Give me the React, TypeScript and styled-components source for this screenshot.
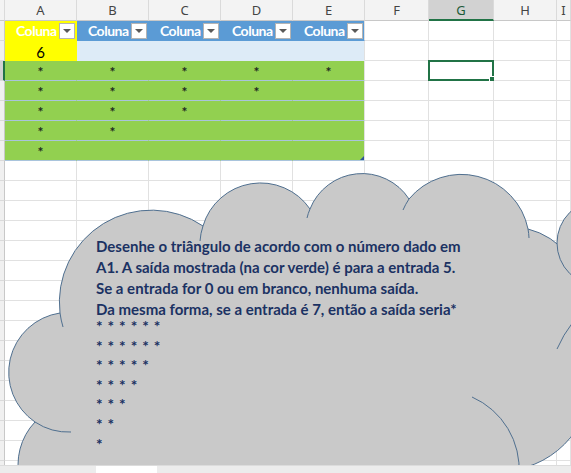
import React from 'react';
import styled, { createGlobalStyle } from 'styled-components';

const GlobalStyle = createGlobalStyle`
  html, body { margin: 0; padding: 0; background: #fff; }
  body { width: 571px; height: 473px; overflow: hidden; }
`;

const TEMPLATE = '5px 72px 72px 72px 72px 72px 64px 65px 63px 1fr';
const LETTERS = ['A', 'B', 'C', 'D', 'E', 'F', 'G', 'H', 'I'];
const GRID = '#e1e1e1';
const YELLOW = '#ffff00';
const BLUE = '#5b9bd5';
const PALE = '#ddebf7';
const GREEN = '#92d050';
const ROWLINE = '#a9c4dc';
const SELECT = '#217346';

const Window = styled.div`
  position: relative;
  width: 571px;
  height: 473px;
  overflow: hidden;
  display: flex;
  flex-direction: column;
  background: #fff;
`;

const HeaderRow = styled.div`
  display: grid;
  grid-template-columns: ${TEMPLATE};
  height: 21px;
  flex: none;
`;

const ColHead = styled.div<{ $active?: boolean }>`
  box-sizing: border-box;
  display: flex;
  align-items: center;
  justify-content: center;
  background: ${p => (p.$active ? '#d2d2d2' : '#f3f3f3')};
  color: ${p => (p.$active ? '#1e5a37' : '#444')};
  border-right: 1px solid #dadada;
  border-bottom: ${p => (p.$active ? `2px solid ${SELECT}` : '1px solid #c8c8c8')};
  font-family: 'Noto Sans', 'Open Sans', sans-serif;
  font-size: 13px;
  padding-top: ${p => (p.$active ? '1px' : '0')};
`;

const Sheet = styled.div`
  flex: 1;
  overflow: hidden;
  display: grid;
  grid-template-columns: ${TEMPLATE};
  grid-auto-rows: 20px;
`;

const RowHead = styled.div<{ $active?: boolean }>`
  box-sizing: border-box;
  background: ${p => (p.$active ? '#d2d2d2' : '#f0f0f0')};
  border-right: ${p => (p.$active ? `2px solid ${SELECT}` : '1px solid #c8c8c8')};
  border-bottom: 1px solid #dadada;
`;

const Cell = styled.div<{ $bg?: string; $line?: string; $vline?: string }>`
  position: relative;
  box-sizing: border-box;
  display: flex;
  align-items: center;
  justify-content: center;
  background: ${p => p.$bg ?? '#fff'};
  border-right: 1px solid ${p => p.$vline ?? GRID};
  border-bottom: 1px solid ${p => p.$line ?? GRID};
  font-family: Lato, 'Open Sans', sans-serif;
  font-size: 15px;
  color: #000;
`;

const TableHead = styled(Cell)`
  justify-content: flex-start;
  padding-left: 11px;
  padding-right: 1px;
`;

const HeadLabel = styled.span`
  flex: 1;
  min-width: 0;
  white-space: nowrap;
  color: #fff;
  font-weight: 700;
  font-size: 14px;
  letter-spacing: -0.5px;
`;

const FilterButton = styled.span`
  box-sizing: border-box;
  flex: none;
  width: 16px;
  height: 16px;
  background: #fff;
  border: 1px solid #b4b4b4;
  display: flex;
  align-items: center;
  justify-content: center;
`;

const Caret = styled.span`
  width: 0;
  height: 0;
  border-left: 4px solid transparent;
  border-right: 4px solid transparent;
  border-top: 4px solid #595959;
`;

const Value = styled.span`
  margin-top: 3px;
`;

const Star = styled.span`
  font-size: 14px;
  font-weight: 700;
  color: #1f2a1f;
  margin-top: 2px;
`;

const Selection = styled.div`
  position: absolute;
  left: -1px;
  top: -1px;
  right: -1px;
  bottom: -1px;
  border: 2px solid ${SELECT};
`;

const Handle = styled.div`
  position: absolute;
  right: -4px;
  bottom: -4px;
  width: 5px;
  height: 5px;
  background: ${SELECT};
  border: 1px solid #fff;
`;

const ResizeMark = styled.div`
  position: absolute;
  right: 0;
  bottom: 0;
  width: 0;
  height: 0;
  border-left: 4px solid transparent;
  border-bottom: 4px solid #2f5597;
`;

const TabBar = styled.div`
  position: relative;
  z-index: 3;
  flex: none;
  height: 7px;
  background: #ececec;
  border-top: 1px solid #dcdcdc;
  display: flex;
`;

const Tab = styled.div`
  margin-left: 96px;
  width: 61px;
  background: #fff;
`;

const CloudLayer = styled.svg`
  position: absolute;
  left: 0;
  top: 0;
  z-index: 1;
  pointer-events: none;
`;

const CloudText = styled.div`
  position: absolute;
  left: 96px;
  top: 236px;
  z-index: 2;
  font-family: Lato, 'Open Sans', sans-serif;
  font-weight: 700;
  font-size: 15px;
  color: #1b3263;
  white-space: nowrap;
`;

const Sentence = styled.div`
  line-height: 21px;
`;

const StarBlock = styled.div`
  margin-top: -3px;
  font-size: 15.5px;
`;

const StarLine = styled.div`
  line-height: 19.6px;
  letter-spacing: 0.6px;
`;

const sentences = [
  'Desenhe o triângulo de acordo com o número dado em',
  'A1. A saída mostrada (na cor verde) é para a entrada 5.',
  'Se a entrada for 0 ou em branco, nenhuma saída.',
  'Da mesma forma, se a entrada é 7, então a saída seria*',
];

const starCounts = [6, 6, 5, 4, 3, 2, 1];

const Cloud = () => (
  <CloudLayer width="571" height="473" viewBox="0 0 571 473">
    <g fill="#c9c9c9" stroke="#4f6f8f" strokeWidth="1">
      <path
        d="M 20 480
           A 62 62 0 0 1 35 422
           A 60 60 0 0 1 60 313
           A 92 92 0 0 1 203 226
           A 60 60 0 0 1 310 209
           A 56 56 0 0 1 409 199
           A 68 68 0 0 1 528 229
           A 74 74 0 0 1 584 300
           L 591 380
           A 91 91 0 0 1 500 471
           L 500 485 L 20 485 Z"
      />
    </g>
    <g fill="none" stroke="#4f6f8f" strokeWidth="1">
      <path d="M 60 313 A 92 92 0 0 0 63 327" />
      <path d="M 35 422 A 60 60 0 0 0 71 432" />
      <path d="M 203 226 A 60 60 0 0 0 200 241" />
      <path d="M 310 209 A 56 56 0 0 0 307 218" />
      <path d="M 409 199 A 68 68 0 0 0 403 210" />
      <path d="M 528 229 A 68 68 0 0 1 529 238" />
      <path d="M 573 322 Q 563 335 557 349" />
      <path d="M 472 397 A 79 79 0 0 1 519 475" />
    </g>
    <circle cx="600" cy="243" r="43" fill="#c9c9c9" stroke="#4f6f8f" strokeWidth="1" />
  </CloudLayer>
);

const ROWS = 23;

function tableCell(row: number, col: number) {
  // row is the 1-based sheet row, col the 0-based column index
  if (col > 4 || row > 7) return null;
  if (row === 1) {
    const bg = col === 0 ? YELLOW : BLUE;
    return (
      <TableHead $bg={bg} $vline={col === 4 ? GRID : bg} $line={bg}>
        <HeadLabel>Coluna</HeadLabel>
        <FilterButton>
          <Caret />
        </FilterButton>
      </TableHead>
    );
  }
  if (row === 2) {
    return col === 0 ? (
      <Cell $bg={YELLOW} $vline={YELLOW} $line={YELLOW}>
        <Value>6</Value>
      </Cell>
    ) : (
      <Cell $bg={PALE} $vline={col === 4 ? GRID : PALE} $line={PALE} />
    );
  }
  const filled = col <= 7 - row;
  return (
    <Cell $bg={GREEN} $vline={col === 4 ? GRID : GREEN} $line={ROWLINE}>
      {filled && <Star>*</Star>}
      {row === 7 && col === 4 && <ResizeMark />}
    </Cell>
  );
}

export default function App() {
  const rows = Array.from({ length: ROWS }, (_, i) => i + 1);
  return (
    <Window>
      <GlobalStyle />
      <HeaderRow>
        <ColHead />
        {LETTERS.map(l => (
          <ColHead key={l} $active={l === 'G'}>
            {l}
          </ColHead>
        ))}
      </HeaderRow>
      <Sheet>
        {rows.map(r => (
          <React.Fragment key={r}>
            <RowHead $active={r === 3} />
            {LETTERS.map((l, c) => {
              const t = tableCell(r, c);
              if (t) return <React.Fragment key={l}>{t}</React.Fragment>;
              return (
                <Cell key={l}>
                  {r === 3 && l === 'G' && (
                    <Selection>
                      <Handle />
                    </Selection>
                  )}
                </Cell>
              );
            })}
          </React.Fragment>
        ))}
      </Sheet>
      <TabBar>
        <Tab />
      </TabBar>
      <Cloud />
      <CloudText>
        {sentences.map(s => (
          <Sentence key={s}>{s}</Sentence>
        ))}
        <StarBlock>
          {starCounts.map((n, i) => (
            <StarLine key={i}>{Array.from({ length: n }, () => '*').join(' ')}</StarLine>
          ))}
        </StarBlock>
      </CloudText>
    </Window>
  );
}
